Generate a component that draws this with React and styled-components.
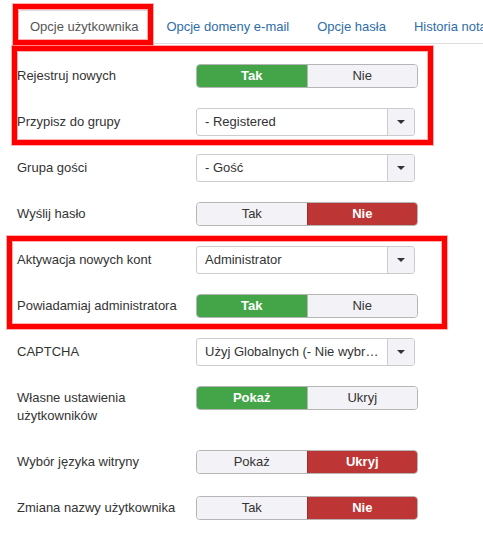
import React from 'react'
import styled, { createGlobalStyle } from 'styled-components'

const GlobalStyle = createGlobalStyle`
  html, body {
    margin: 0;
    padding: 0;
    background: #fff;
  }
  body {
    font-family: "Liberation Sans", Arial, sans-serif;
    font-size: 13px;
    line-height: 18px;
    color: #333;
  }
`

const tabs = ['Opcje użytkownika', 'Opcje domeny e-mail', 'Opcje hasła', 'Historia notatek']

const rows = [
  { label: 'Rejestruj nowych', type: 'toggle', options: ['Tak', 'Nie'], active: 0 },
  { label: 'Przypisz do grupy', type: 'select', value: '- Registered' },
  { label: 'Grupa gości', type: 'select', value: '- Gość' },
  { label: 'Wyślij hasło', type: 'toggle', options: ['Tak', 'Nie'], active: 1 },
  { label: 'Aktywacja nowych kont', type: 'select', value: 'Administrator' },
  { label: 'Powiadamiaj administratora', type: 'toggle', options: ['Tak', 'Nie'], active: 0 },
  { label: 'CAPTCHA', type: 'select', value: 'Użyj Globalnych (- Nie wybrano -)' },
  { label: 'Własne ustawienia użytkowników', type: 'toggle', options: ['Pokaż', 'Ukryj'], active: 0 },
  { label: 'Wybór języka witryny', type: 'toggle', options: ['Pokaż', 'Ukryj'], active: 1 },
  { label: 'Zmiana nazwy użytkownika', type: 'toggle', options: ['Tak', 'Nie'], active: 1 },
]

export default function App() {
  return (
    <Page>
      <GlobalStyle />
      <TabBar>
        {tabs.map((t, i) => (
          <Tab key={t} active={i === 0}>{t}</Tab>
        ))}
      </TabBar>

      <Form>
        {rows.map(row => (
          <Row key={row.label}>
            <Label>{row.label}</Label>
            {row.type === 'toggle' ? (
              <Toggle>
                {row.options.map((o, i) => (
                  <ToggleButton
                    key={o}
                    tone={i === row.active ? (i === 0 ? 'yes' : 'no') : null}
                  >
                    {o}
                  </ToggleButton>
                ))}
              </Toggle>
            ) : (
              <Select>
                <SelectValue>{row.value}</SelectValue>
                <SelectCaret><Caret /></SelectCaret>
              </Select>
            )}
          </Row>
        ))}
      </Form>

      <Highlight style={{ left: 13, top: 4, width: 140, height: 41 }} />
      <Highlight style={{ left: 12, top: 46, width: 421, height: 99 }} />
      <Highlight style={{ left: 7, top: 236, width: 440, height: 93 }} />
    </Page>
  )
}

const Page = styled.div`
  position: relative;
  width: 483px;
  height: 548px;
  overflow: hidden;
  padding: 10px 0 0 17px;
  box-sizing: border-box;
`

const TabBar = styled.div`
  display: flex;
  white-space: nowrap;
  border-bottom: 1px solid #ddd;
  margin-right: -17px;
`

const Tab = styled.div`
  padding: 7px 12px;
  margin-right: 2px;
  margin-bottom: -1px;
  border: 1px solid ${p => (p.active ? '#ddd' : 'transparent')};
  border-bottom-color: ${p => (p.active ? '#fff' : 'transparent')};
  border-radius: 4px 4px 0 0;
  background: ${p => (p.active ? '#fff' : 'transparent')};
  color: ${p => (p.active ? '#555' : '#2f6da8')};
`

const Form = styled.div`
  padding-top: 18px;
`

const Row = styled.div`
  display: flex;
  align-items: flex-start;
  margin-bottom: 18px;
`

const Label = styled.div`
  width: 179px;
  padding: 5px 12px 5px 0;
  box-sizing: border-box;
  line-height: 18px;
`

const Toggle = styled.div`
  display: flex;
  width: 222px;
  height: 24px;
  margin-top: 2px;
  border: 1px solid #b5b5b5;
  border-radius: 4px;
  box-sizing: border-box;
  overflow: hidden;
  background: #f3f2f6;
`

const ToggleButton = styled.div`
  flex: 1;
  display: flex;
  align-items: center;
  justify-content: center;
  font-weight: ${p => (p.tone ? 'bold' : 'normal')};
  color: ${p => (p.tone ? '#fff' : '#333')};
  background: ${p => (p.tone === 'yes' ? '#43a547' : p.tone === 'no' ? '#bd3535' : '#f3f2f6')};
  border-left: 1px solid ${p => (p.tone === 'yes' ? '#398c3c' : p.tone === 'no' ? '#a02c2c' : '#b5b5b5')};
  &:first-child {
    border-left: none;
  }
`

const Select = styled.div`
  display: flex;
  width: 219px;
  height: 28px;
  border: 1px solid #ccc;
  border-radius: 3px;
  box-sizing: border-box;
  background: #fff;
  overflow: hidden;
`

const SelectValue = styled.div`
  flex: 1;
  min-width: 0;
  padding: 0 6px 0 8px;
  line-height: 26px;
  white-space: nowrap;
  overflow: hidden;
  text-overflow: ellipsis;
`

const SelectCaret = styled.div`
  width: 26px;
  display: flex;
  align-items: center;
  justify-content: center;
  border-left: 1px solid #ccc;
  background: #f3f2f6;
`

const Caret = styled.span`
  width: 0;
  height: 0;
  border-top: 4px solid #333;
  border-left: 4px solid transparent;
  border-right: 4px solid transparent;
`

const Highlight = styled.div`
  position: absolute;
  box-sizing: border-box;
  border: 5px solid #ff0000;
  box-shadow: 0 0 0 1px rgba(255, 80, 80, 0.45), inset 0 0 0 1px rgba(255, 80, 80, 0.45);
  pointer-events: none;
`
